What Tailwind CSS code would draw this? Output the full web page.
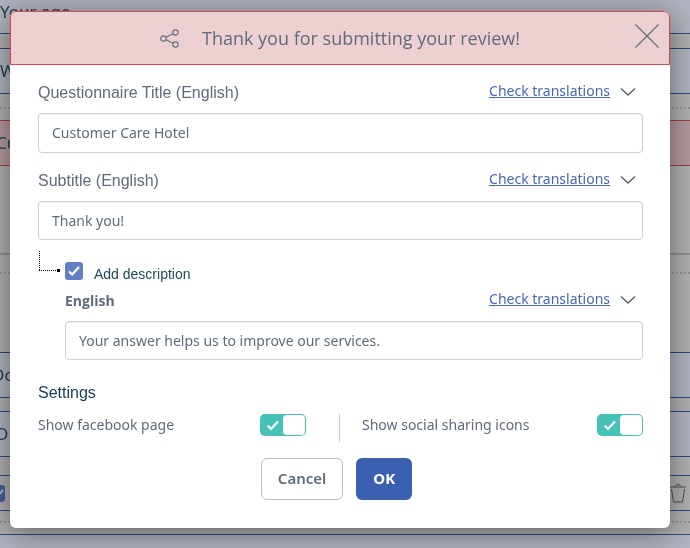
<!DOCTYPE html>
<html lang="en">
<head>
  <meta charset="UTF-8">
  <meta name="viewport" content="width=device-width, initial-scale=1.0">
  <title>Thank you for submitting your review!</title>
  <script src="https://cdn.jsdelivr.net/npm/@tailwindcss/browser@4"></script>
</head>
<body class="min-h-screen overflow-hidden bg-[#b0b0b1] font-['Noto_Sans',sans-serif] text-sm text-[#5f6b7a]">

  <!-- Questionnaire editor behind the dialog -->
  <div class="fixed inset-0 flex flex-col overflow-hidden text-[17px] text-[#1f4254]" aria-hidden="true">
    <div class="h-[34px] shrink-0 border-b border-[#2c4a8c] bg-[#b0b4be] leading-6">Your age</div>
    <div class="mt-[14px] flex h-[46px] shrink-0 items-center border-y border-[#2c4a8c] bg-[#b0b4be]">What</div>
    <div class="mt-[13px] shrink-0 border-t-2 border-dotted border-[#929396]"></div>
    <div class="mt-[11px] flex h-[46px] shrink-0 items-center border-y border-[#a23a44] bg-[#b4999d]"><span class="-ml-1">Cu</span></div>
    <div class="mt-[87px] shrink-0 border-t-2 border-[#929396]"></div>
    <div class="mt-[17px] shrink-0 border-t-2 border-dotted border-[#929396]"></div>
    <div class="mt-[78px] flex h-[46px] shrink-0 items-center border-y border-[#2c4a8c] bg-[#b0b4be]"><span class="-ml-2">Do</span></div>
    <div class="mt-[13px] flex h-[46px] shrink-0 items-center border-y border-[#2c4a8c] bg-[#b0b4be]"><span class="-ml-1">D</span></div>
    <div class="mt-[18px] flex h-9 shrink-0 items-center justify-between border-y border-[#2c4a8c] pr-1">
      <svg class="-ml-3 h-[17px] w-[17px]" viewBox="0 0 17 17" fill="none">
        <rect width="17" height="17" rx="3" fill="#475f9e"/>
        <path d="M5 9l4 3 6-7" stroke="#b3b8c6" stroke-width="2"/>
      </svg>
      <svg class="h-[19px] w-4" viewBox="0 0 16 19" fill="none" stroke="#4a4f58">
        <path d="M0 3h16M5.500 2.500q0-2 2.500-2t2.500 2M1.500 5l2 13h9l2-13"/>
      </svg>
    </div>
    <div class="mt-[10px] shrink-0 border-t-2 border-dotted border-[#929396]"></div>
    <div class="mt-[11px] h-[46px] shrink-0 border-y border-[#2c4a8c] bg-[#b0b4be]"></div>
  </div>

  <!-- Dialog -->
  <div class="relative pt-[11px] pr-5 pl-[10px]">
    <div role="dialog" aria-labelledby="dialog-title" class="rounded-md bg-white pb-7 shadow-[0_5px_30px_rgba(0,0,0,0.45)]">
      <header class="relative flex h-[54px] items-center justify-center rounded-t-md border border-[#d9484f] bg-[#edd0d2]">
        <svg class="mr-[22px] h-[19px] w-5" viewBox="0 0 20 19" fill="none" stroke="#66707c" stroke-width="1.200">
          <circle cx="3.500" cy="9.500" r="2.700"/>
          <circle cx="15.500" cy="3.500" r="2.700"/>
          <circle cx="15.500" cy="15.500" r="2.700"/>
          <path d="M6 8.300l7-3.500M6 10.700l7 3.500"/>
        </svg>
        <h1 id="dialog-title" class="font-['Open_Sans',sans-serif] text-lg leading-6">Thank you for submitting your review!</h1>
        <button type="button" aria-label="Close" class="absolute top-3 right-[10px]">
          <svg class="h-6 w-6" viewBox="0 0 24 24" fill="none" stroke="#66707c" stroke-width="1.300">
            <path d="M.5.5l23 23M23.500.5l-23 23"/>
          </svg>
        </button>
      </header>

      <form class="pt-3 pr-[27px] pl-7">
        <div class="flex h-9 items-start justify-between">
          <label for="title" class="pt-1 font-['Liberation_Sans',sans-serif] text-base leading-6">Questionnaire Title (English)</label>
          <div class="flex items-center gap-[10px] pt-1 pr-[7px]">
            <a href="#" class="leading-5 text-[#4468b8] underline">Check translations</a>
            <svg class="h-[9px] w-4" viewBox="0 0 16 9" fill="none" stroke="#55606c" stroke-width="1.400"><path d="M1 1.500l7 6.500 7-6.500"/></svg>
          </div>
        </div>
        <input id="title" type="text" value="Customer Care Hotel" class="block h-10 w-full rounded border border-[#d0d0d0] px-[13px] pb-0.5 text-sm shadow-[inset_0_1px_1px_rgba(0,0,0,0.06)]">

        <div class="mt-3 flex h-9 items-start justify-between">
          <label for="subtitle" class="pt-1 font-['Liberation_Sans',sans-serif] text-base leading-6">Subtitle (English)</label>
          <div class="flex items-center gap-[10px] pt-1 pr-[7px]">
            <a href="#" class="leading-5 text-[#4468b8] underline">Check translations</a>
            <svg class="h-[9px] w-4" viewBox="0 0 16 9" fill="none" stroke="#55606c" stroke-width="1.400"><path d="M1 1.500l7 6.500 7-6.500"/></svg>
          </div>
        </div>
        <input id="subtitle" type="text" value="Thank you!" class="block h-[39px] w-full rounded border border-[#d0d0d0] px-[13px] text-sm shadow-[inset_0_1px_1px_rgba(0,0,0,0.06)]">

        <div class="mt-[11px] flex">
          <svg class="h-[22px] w-[27px] shrink-0" viewBox="0 0 27 22" fill="none" stroke="#000">
            <path d="M1.500 0v20M1 19.500h18" stroke-dasharray="1 1"/>
            <path d="M19 19.500h3" stroke-width="3"/>
          </svg>
          <div class="flex-1">
            <label class="flex items-start gap-[11px] pt-[11px] font-['Liberation_Sans',sans-serif] text-sm text-[#1c4a59]">
              <span class="relative block h-[18px] w-[18px]">
                <input type="checkbox" checked class="block h-[18px] w-[18px] appearance-none rounded-[3px] bg-[#6280c2]">
                <svg class="pointer-events-none absolute inset-0" viewBox="0 0 18 18" fill="none" stroke="#fff" stroke-width="2.200"><path d="M4 9.500l3.200 3L14 5"/></svg>
              </span>
              <span class="pt-[2px] leading-5">Add description</span>
            </label>
            <div class="mt-[5px] flex h-8 items-start justify-between">
              <label for="description" class="pt-0.5 font-['Open_Sans',sans-serif] font-bold leading-5">English</label>
              <div class="flex items-center gap-[10px] pr-[7px]">
                <a href="#" class="leading-5 text-[#4468b8] underline">Check translations</a>
                <svg class="h-[9px] w-4" viewBox="0 0 16 9" fill="none" stroke="#55606c" stroke-width="1.400"><path d="M1 1.500l7 6.500 7-6.500"/></svg>
              </div>
            </div>
            <input id="description" type="text" value="Your answer helps us to improve our services." class="block h-[39px] w-full rounded border border-[#d0d0d0] px-[13px] text-sm shadow-[inset_0_1px_1px_rgba(0,0,0,0.06)]">
          </div>
        </div>

        <h2 class="mt-[21px] font-['Liberation_Sans',sans-serif] text-base leading-6 text-[#0f3f4f]">Settings</h2>
        <div class="mt-[9px] grid h-7 grid-cols-[301fr_304fr]">
          <div class="flex items-start justify-between pr-[33px]">
            <label for="facebook" class="leading-[22px]">Show facebook page</label>
            <span class="relative block h-[22px] w-[46px]">
              <input id="facebook" type="checkbox" role="switch" checked class="block h-[22px] w-[46px] appearance-none rounded-[5px] bg-[#46c3b6]">
              <span class="pointer-events-none absolute top-px right-px h-5 w-[22px] rounded bg-white"></span>
              <svg class="pointer-events-none absolute top-1.5 left-[7px] h-[11px] w-3" viewBox="0 0 12 11" fill="none" stroke="#fff" stroke-width="2.200"><path d="M.8 5.500l3.200 3.500 7-7.500"/></svg>
            </span>
          </div>
          <div class="flex items-start justify-between border-l border-[#c4c7cb] pl-[22px]">
            <label for="sharing" class="leading-[22px]">Show social sharing icons</label>
            <span class="relative block h-[22px] w-[46px]">
              <input id="sharing" type="checkbox" role="switch" checked class="block h-[22px] w-[46px] appearance-none rounded-[5px] bg-[#46c3b6]">
              <span class="pointer-events-none absolute top-px right-px h-5 w-[22px] rounded bg-white"></span>
              <svg class="pointer-events-none absolute top-1.5 left-[7px] h-[11px] w-3" viewBox="0 0 12 11" fill="none" stroke="#fff" stroke-width="2.200"><path d="M.8 5.500l3.200 3.500 7-7.500"/></svg>
            </span>
          </div>
        </div>

        <div class="mt-4 flex justify-center gap-[13px] pr-2">
          <button type="button" class="h-[42px] rounded-md border border-[#bcbcbc] px-4 text-[15px] font-semibold">Cancel</button>
          <button type="submit" class="h-[42px] rounded-md bg-[#3b60b1] px-[17px] text-[15px] font-bold text-white">OK</button>
        </div>
      </form>
    </div>
  </div>
</body>
</html>
